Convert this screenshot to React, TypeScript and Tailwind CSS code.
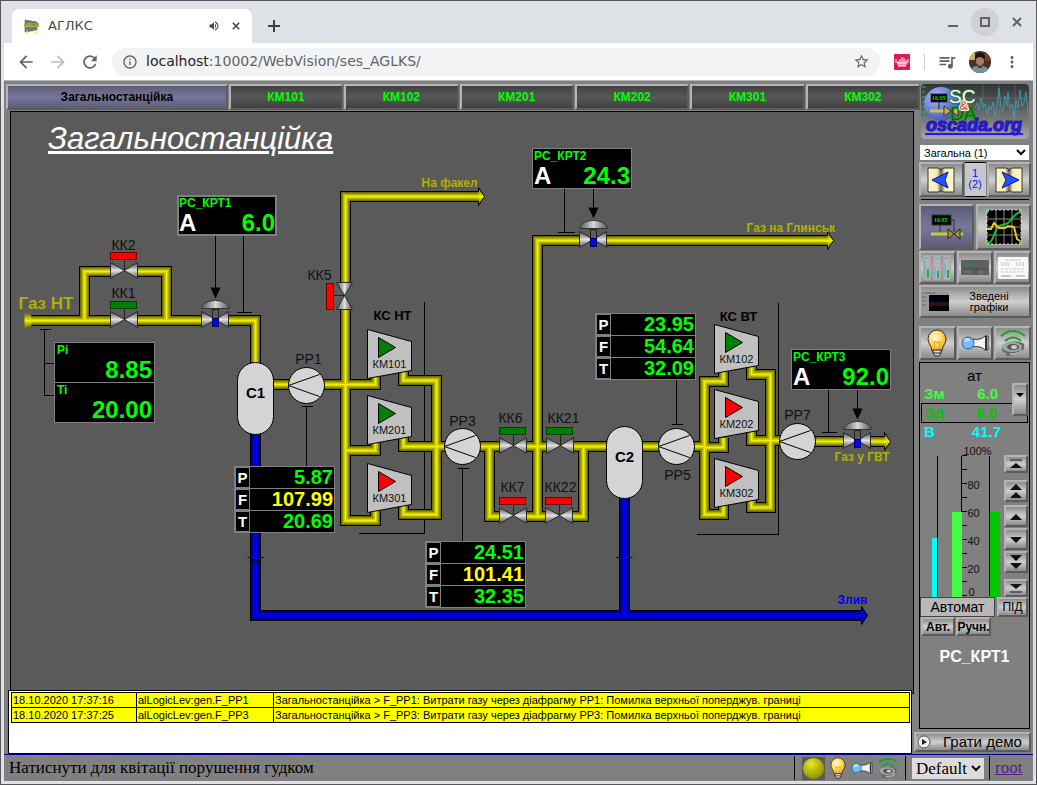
import { useState } from "react"
import type { ReactNode } from "react"
import {
  MdArrowBack,
  MdArrowForward,
  MdInfoOutline,
  MdMoreVert,
  MdQueueMusic,
  MdRefresh,
  MdStarBorder,
  MdVolumeUp,
} from "react-icons/md"

const bevel = "border-2 border-t-[#b4b4b4] border-l-[#b4b4b4] border-r-[#5c5c5c] border-b-[#5c5c5c]"
const metal = `${bevel} bg-linear-to-b from-[#8c8c8c] via-[#cfcfcf] to-[#8c8c8c] flex items-center justify-center`

const tabs = ["КМ101", "КМ102", "КМ201", "КМ202", "КМ301", "КМ302"]

const alarms = [
  {
    time: "18.10.2020 17:37:16",
    source: "alLogicLev:gen.F_PP1",
    text: "Загальностанційка > F_PP1: Витрати газу через діафрагму PP1: Помилка верхньої поперджув. границі",
  },
  {
    time: "18.10.2020 17:37:25",
    source: "alLogicLev:gen.F_PP3",
    text: "Загальностанційка > F_PP3: Витрати газу через діафрагму PP3: Помилка верхньої поперджув. границі",
  },
]

const gasPipes = [
  "M30 320H255V366",
  "M84 320V271H166V320",
  "M270 384H375V374",
  "M479 196H345V520H375V508",
  "M345 450H375V440",
  "M403 368V380H436V514H403V504",
  "M403 434V446H608",
  "M489 446V516H583V446",
  "M828 240H537V516",
  "M640 446H704",
  "M723 371V381H704V514H723V504",
  "M704 447H723V437",
  "M751 366V374H770V507H751V498",
  "M751 430V440H798",
  "M798 441H885",
]

const drainPipes = ["M255 430V615H862", "M624 494V615"]

const gasLayers = [
  [11, "#000000"],
  [9, "#6e6e00"],
  [7, "#8c8c00"],
  [5, "#b4b400"],
  [3, "#d2d200"],
  [1, "#f2f200"],
] as const

const drainLayers = [
  [11, "#000000"],
  [9, "#000078"],
  [7, "#0000a0"],
  [5, "#0000c8"],
  [3, "#0000e6"],
] as const

// ---------- mimic symbols ----------

function Pipes({ paths, layers }: { paths: string[]; layers: readonly (readonly [number, string])[] }) {
  return (
    <g fill="none" shapeRendering="crispEdges">
      {layers.map(([width, color]) => (
        <path key={width} d={paths.join("")} stroke={color} strokeWidth={width} />
      ))}
    </g>
  )
}

function PipeEnd({ x, y, fill }: { x: number; y: number; fill: string }) {
  return (
    <g transform={`translate(${x} ${y})`}>
      <path d="M0 -9L6 0L0 9Z" fill={fill} />
      <path d="M0 -5V-9L6 0L0 9V5" fill="none" stroke="#000" />
    </g>
  )
}

function BowTie() {
  return (
    <>
      <rect x="-14" y="-6" width="27" height="14" fill="#5a5a5a" />
      <path d="M-14 -8L0 0L13 -8V8L0 0L-14 8Z" fill="url(#steel)" stroke="#2a2a2a" />
    </>
  )
}

function Valve({ x, y, open, vertical }: { x: number; y: number; open?: boolean; vertical?: boolean }) {
  return (
    <g transform={`translate(${x} ${y})${vertical ? " rotate(-90)" : ""}`}>
      <BowTie />
      <path d="M0 0V-11" stroke="#222" />
      <rect
        x="-14"
        y="-18"
        width="26"
        height="7"
        fill={open ? "#008000" : "#ff0000"}
        stroke={open ? "#004000" : "#700000"}
      />
    </g>
  )
}

function ControlValve({ x, y }: { x: number; y: number }) {
  return (
    <g transform={`translate(${x} ${y})`}>
      <BowTie />
      <path d="M-14 -11C-13 -16 -7 -19 0 -19S13 -16 14 -11Z" fill="url(#steelH)" stroke="#333" />
      <rect x="-3" y="-10" width="6" height="10" fill="#5a5a5a" stroke="#222" />
      <rect x="-3" y="-1" width="6" height="8" fill="#0000ff" stroke="#000060" />
      <path d="M-5 -32H5L0 -21Z" fill="#000" />
    </g>
  )
}

function Meter({ x, y }: { x: number; y: number }) {
  return (
    <g transform={`translate(${x} ${y})`} stroke="#000">
      <circle r="18" fill="#d4d4d4" />
      <path d="M13 -11L-18 0L13 11" fill="none" />
    </g>
  )
}

function Vessel({ x, y, name }: { x: number; y: number; name: string }) {
  return (
    <g>
      <rect x={x - 18} y={y} width="36" height="72" rx="18" fill="#d4d4d4" stroke="#000" />
      <text x={x} y={y + 35} fontSize="15" fontWeight="bold" textAnchor="middle">
        {name}
      </text>
    </g>
  )
}

function Compressor({ x, y, name, running }: { x: number; y: number; name: string; running?: boolean }) {
  return (
    <g transform={`translate(${x} ${y})`}>
      <path d="M0 0L44 12V41L0 49Z" fill="#c0c0c0" stroke="#000" />
      <path d="M11 8L28 18L11 28Z" fill={running ? "#008000" : "#ff0000"} stroke="#000" />
      <text x="22" y="38" fontSize="11" textAnchor="middle" fill="#111">
        {name}
      </text>
    </g>
  )
}

function Tag({ x, y, children }: { x: number; y: number; children: string }) {
  return (
    <text x={x} y={y} fontSize="14" textAnchor="middle" fill="#111">
      {children}
    </text>
  )
}

function Plant() {
  return (
    <svg
      className="absolute left-0 top-0"
      width="902"
      height="578"
      viewBox="10.5 111.5 902 578"
      fontFamily="Liberation Sans, Arial, sans-serif"
    >
      <defs>
        <linearGradient id="steel" x1="0" y1="0" x2="0" y2="1">
          <stop offset="0" stopColor="#4c4c4c" />
          <stop offset="0.5" stopColor="#e0e0e0" />
          <stop offset="1" stopColor="#4c4c4c" />
        </linearGradient>
        <linearGradient id="steelH">
          <stop offset="0" stopColor="#555" />
          <stop offset="0.5" stopColor="#d8d8d8" />
          <stop offset="1" stopColor="#555" />
        </linearGradient>
        <linearGradient id="gas" x1="0" y1="0" x2="0" y2="1">
          <stop offset="0.1" stopColor="#707000" />
          <stop offset="0.5" stopColor="#f2f200" />
          <stop offset="0.9" stopColor="#707000" />
        </linearGradient>
      </defs>

      <g fill="none" stroke="#000" shapeRendering="crispEdges">
        <path d="M424 301V533H358" />
        <path d="M778 302V534H696" />
        <path d="M39 329H50M44 329V395H54M44 363H54" />
        <path d="M215 235V290M243 235V312M236 312H251" />
        <path d="M593 188V210M564 188V232M557 232H574" />
        <path d="M857 388V410M828 388V432M821 432H836" />
        <path d="M301 406H312M306 406V466" />
        <path d="M457 468H468M462 468V542" />
        <path d="M671 424H682M676 379V424" />
      </g>

      <Pipes paths={drainPipes} layers={drainLayers} />
      <Pipes paths={gasPipes} layers={gasLayers} />

      <path d="M24 311L31 315V325L24 329Z" fill="url(#gas)" />
      <PipeEnd x={478} y={196} fill="url(#gas)" />
      <PipeEnd x={827} y={240} fill="url(#gas)" />
      <PipeEnd x={884} y={441} fill="url(#gas)" />
      <PipeEnd x={861} y={615} fill="#0000c8" />
      <path d="M247 557H250M260 557H263M250 558L255 563L260 558" fill="none" stroke="#000" />
      <path d="M616 557H619M629 557H632M619 558L624 563L629 558" fill="none" stroke="#000" />

      <Valve x={124} y={270} />
      <Valve x={124} y={319} open />
      <Valve x={344} y={295} vertical />
      <Valve x={513} y={445} open />
      <Valve x={560} y={445} open />
      <Valve x={513} y={515} />
      <Valve x={559} y={515} />
      <ControlValve x={215} y={319} />
      <ControlValve x={593} y={239} />
      <ControlValve x={857} y={440} />

      <Vessel x={255} y={362} name="С1" />
      <Vessel x={624} y={426} name="С2" />
      <Meter x={306} y={385} />
      <Meter x={462} y={446} />
      <Meter x={676} y={446} />
      <Meter x={797} y={441} />

      <Compressor x={367} y={329} name="КМ101" running />
      <Compressor x={367} y={395} name="КМ201" running />
      <Compressor x={367} y={463} name="КМ301" />
      <Compressor x={714} y={324} name="КМ102" running />
      <Compressor x={714} y={389} name="КМ202" />
      <Compressor x={714} y={458} name="КМ302" />

      <Tag x={123} y={249}>КК2</Tag>
      <Tag x={123} y={297}>КК1</Tag>
      <Tag x={319} y={279}>КК5</Tag>
      <Tag x={510} y={422}>КК6</Tag>
      <Tag x={563} y={422}>КК21</Tag>
      <Tag x={512} y={491}>КК7</Tag>
      <Tag x={560} y={491}>КК22</Tag>
      <Tag x={308} y={363}>РР1</Tag>
      <Tag x={462} y={425}>РР3</Tag>
      <Tag x={677} y={479}>РР5</Tag>
      <Tag x={797} y={419}>РР7</Tag>

      <g fontWeight="bold" fontSize="12" fill="#b0b000">
        <text x="18" y="308" fontSize="17">Газ НТ</text>
        <text x="421" y="186">На факел</text>
        <text x="746" y="231">Газ на Глинськ</text>
        <text x="834" y="460">Газ у ГВТ</text>
        <text x="837" y="603" fill="#0000ff">Злив</text>
      </g>
      <g fontWeight="bold" fontSize="13" textAnchor="middle" fill="#000">
        <text x="392" y="319">КС НТ</text>
        <text x="738" y="320">КС ВТ</text>
      </g>
    </svg>
  )
}

// ---------- readouts over the mimic ----------

function Controller({ name, value, className }: { name: string; value: string; className: string }) {
  return (
    <div className={`absolute w-[100px] border border-[#808080] bg-black pl-px font-bold text-[#00ff00] ${className}`}>
      <div className="text-[12px] leading-[14px]">{name}</div>
      <div className="flex items-center justify-between pr-px text-[24px] leading-[25px]">
        <span className="text-white">А</span>
        <span>{value}</span>
      </div>
    </div>
  )
}

function SensorBox({ name, value }: { name: string; value: string }) {
  return (
    <div className="h-[39px] bg-black px-0.5 font-bold text-[#00ff00]">
      <div className="text-[12px] leading-[14px]">{name}</div>
      <div className="text-right text-[24px] leading-[26px]">{value}</div>
    </div>
  )
}

function PftTable({ values, flowAlarm, className }: { values: string[]; flowAlarm?: boolean; className: string }) {
  return (
    <div className={`absolute flex w-[101px] flex-col gap-px bg-[#808080] p-px font-bold ${className}`}>
      {["P", "F", "T"].map((key, i) => (
        <div key={key} className="flex h-[21px]">
          <span className="my-px ml-px mr-px w-[13px] bg-black text-center text-[15px] leading-[19px] text-white">{key}</span>
          <span
            className={`flex-1 bg-black pr-px text-right text-[20px] leading-[21px] ${
              flowAlarm && key === "F" ? "text-[#ffff00]" : "text-[#00ff00]"
            }`}
          >
            {values[i]}
          </span>
        </div>
      ))}
    </div>
  )
}

function Mimic() {
  return (
    <section className="relative ml-1.5 mr-[5px] min-h-[583px] flex-1 overflow-hidden border border-black bg-[#5a5a5a]">
      <h1 className="pl-[37px] pt-2 text-[31px] leading-[38px] text-white italic underline">Загальностанційка</h1>
      <Plant />
      <Controller name="PC_КРТ1" value="6.0" className="left-[166px] top-[83px] ring-1 ring-inset ring-[#808080]" />
      <Controller name="PC_КРТ2" value="24.3" className="left-[521px] top-[36px]" />
      <Controller name="PC_КРТ3" value="92.0" className="left-[780px] top-[237px]" />
      <div className="absolute left-[43px] top-[230px] flex w-[101px] flex-col gap-px bg-[#808080] p-px">
        <SensorBox name="Pi" value="8.85" />
        <SensorBox name="Ti" value="20.00" />
      </div>
      <PftTable values={["5.87", "107.99", "20.69"]} flowAlarm className="left-[223px] top-[354px]" />
      <PftTable values={["24.51", "101.41", "32.35"]} flowAlarm className="left-[414px] top-[429px]" />
      <PftTable values={["23.95", "54.64", "32.09"]} className="left-[584px] top-[201px]" />
    </section>
  )
}

// ---------- small pictures ----------

function Bulb({ className }: { className: string }) {
  return (
    <svg viewBox="0 0 20 28" className={className}>
      <defs>
        <radialGradient id="glow" cx="0.4" cy="0.35" r="0.7">
          <stop offset="0" stopColor="#fffbe0" />
          <stop offset="0.5" stopColor="#ffdc60" />
          <stop offset="1" stopColor="#f5a000" />
        </radialGradient>
      </defs>
      <path d="M10 1a9 9 0 0 1 9 9c0 5-4 7-4 12H5c0-5-4-7-4-12a9 9 0 0 1 9-9Z" fill="url(#glow)" stroke="#3a3020" />
      <path d="M8 21L7 12L10 14L13 12L12 21" fill="none" stroke="#e8a020" />
      <path d="M6 21h8v3l-2 3H8l-2-3Z" fill="#d8d8d8" stroke="#222" />
      <path d="M6 24h8" stroke="#222" />
    </svg>
  )
}

function Whistle({ className }: { className: string }) {
  return (
    <svg viewBox="0 0 28 18" className={className}>
      <path d="M11 5C17 6 21 5 24 2H27V16H24C21 13 17 12 11 13Z" fill="#f0f4f8" stroke="#333" />
      <path d="M25 2V16" stroke="#333" strokeWidth="2" />
      <circle cx="7" cy="9" r="6" fill="#78bcf8" stroke="#1860a8" />
      <ellipse cx="6" cy="6" rx="3" ry="2" fill="#b8dcff" />
    </svg>
  )
}

function Siren({ className }: { className: string }) {
  return (
    <svg viewBox="0 0 26 28" className={className}>
      <path d="M1 7Q13 -3 25 7M5 12Q13 5 21 12" fill="none" stroke="#18a030" strokeWidth="2" />
      <path d="M2 18C4 12 20 11 24 15C26 21 19 27 10 27C5 27 5 25 7 24C2 24 1 20 2 18Z" fill="#686868" />
      <ellipse cx="12" cy="18" rx="10" ry="5" fill="#a4a4a4" />
      <ellipse cx="13" cy="18" rx="6" ry="3" fill="#505050" />
      <ellipse cx="14" cy="18" rx="3" ry="2" fill="#ccc" />
      <path d="M10 25Q18 26 22 21" fill="none" stroke="#b4b4b4" strokeWidth="2" />
    </svg>
  )
}

function Logo() {
  return (
    <a href="#oscada" aria-label="oscada.org" className="block overflow-hidden rounded-sm">
      <svg viewBox="0 0 108 55" className="block w-full" fontFamily="Liberation Sans, Arial, sans-serif">
        <defs>
          <linearGradient id="plate" x1="0" y1="0" x2="0" y2="1">
            <stop offset="0" stopColor="#303434" />
            <stop offset="0.5" stopColor="#606464" />
            <stop offset="1" stopColor="#a8a8a8" />
          </linearGradient>
          <radialGradient id="ball" cx="0.35" cy="0.3" r="0.8">
            <stop offset="0" stopColor="#a8b8f8" />
            <stop offset="1" stopColor="#3850b8" />
          </radialGradient>
        </defs>
        <rect width="108" height="55" rx="2" fill="url(#plate)" />
        <path d="M0 14H108M0 28H108M62 0V42M78 0V42M94 0V42" stroke="#888" strokeOpacity="0.4" />
        <path d="M1 3h4M1 8h3M1 13h4M1 18h3M1 23h4M1 28h3M1 33h4" stroke="#20c060" />
        <path
          d="M54 24L56 19L58 26L60 14L62 23L64 20L66 30L68 22L70 26L72 18L74 32L76 21L78 4L80 24L82 27L84 12L86 22L87 8L89 25L91 20L93 33L95 16L97 24L99 6L101 22L103 19L105 8L107 30"
          fill="none"
          stroke="#38a8b8"
          strokeOpacity="0.8"
        />
        <circle cx="20" cy="20" r="17" fill="url(#ball)" />
        <rect x="10" y="10" width="16" height="8" fill="#000" stroke="#333" />
        <text x="11" y="16" fontSize="6" fontFamily="Liberation Serif, serif" fontWeight="bold" fill="#00e000">10.95</text>
        <path d="M18 18V27" stroke="#222" />
        <path d="M9 27H28" stroke="#c8c840" strokeWidth="3" />
        <path d="M23 22L30 27L23 32ZM37 22L30 27L37 32Z" fill="#c8b840" stroke="#333" />
        <g paintOrder="stroke" strokeLinejoin="round">
          <text x="29" y="36" fontSize="19" fill="#007000" stroke="#00b000" strokeWidth="1">DA</text>
          <text x="28" y="19" fontSize="19" fill="#fff" stroke="#208040" strokeWidth="2">SC</text>
          <text x="38" y="26" fontSize="13" fontWeight="bold" fill="#e86040" stroke="#fff" strokeWidth="2">&amp;</text>
        </g>
        <g fontSize="18" fontWeight="bold" fontStyle="italic">
          <text x="5" y="47" fill="#2818e8" stroke="#180878" strokeWidth="1" paintOrder="stroke">oscada.org</text>
        </g>
        <path d="M4 50H102" stroke="#2818e8" strokeWidth="2" />
      </svg>
    </a>
  )
}

function BookArrow({ back }: { back?: boolean }) {
  return (
    <svg width="28" height="26" viewBox="0 0 28 26">
      <defs>
        <linearGradient id="pages">
          <stop offset="0" stopColor="#fdf6c8" />
          <stop offset="0.35" stopColor="#f4ecb8" />
          <stop offset="0.5" stopColor="#6c6650" />
          <stop offset="0.65" stopColor="#f4ecb8" />
          <stop offset="1" stopColor="#fdf6c8" />
        </linearGradient>
      </defs>
      <path d="M1 1H11Q14 1 14 4Q14 1 17 1H27V25H17Q14 25 14 23Q14 25 11 25H1Z" fill="url(#pages)" stroke="#3a3830" />
      <path d={back ? "M5 13L21 5L18 13L21 21Z" : "M24 13L7 5L11 13L7 21Z"} fill="#2850ff" stroke="#0a1a80" />
    </svg>
  )
}

function SchemeIcon() {
  return (
    <svg width="34" height="28" viewBox="0 0 34 28">
      <rect x="2" y="2" width="19" height="10" fill="#000" stroke="#333" />
      <text x="4" y="9" fontSize="6" fontWeight="bold" fontFamily="Liberation Serif, serif" fill="#00e000">10.95</text>
      <path d="M10 12V20M21 7H24V20" fill="none" stroke="#333" />
      <path d="M1 21H33" stroke="#c8c838" strokeWidth="3" />
      <path d="M18 16L30 26V16L18 26Z" fill="#a09838" stroke="#222" />
    </svg>
  )
}

function TrendIcon() {
  return (
    <svg width="36" height="36" viewBox="0 0 36 36">
      <rect x="1" y="1" width="34" height="34" fill="#000" stroke="#ddd" strokeDasharray="2 2" />
      <path d="M10 1V35M18 1V35M26 1V35M1 10H35M1 18H35M1 26H35" stroke="#888" />
      <path d="M3 34C8 32 8 22 12 18S20 17 23 13S30 4 34 3" fill="none" stroke="#18c030" strokeWidth="2" />
      <path d="M1 20L5 20L8 14L13 19H19L22 17L28 18L31 30L34 32" fill="none" stroke="#f0c820" strokeWidth="2" />
      <path d="M0 0h3v3H0ZM33 0h3v3h-3ZM0 33h3v3H0ZM33 33h3v3h-3Z" fill="#60e060" />
    </svg>
  )
}

function PanelIcon() {
  return (
    <svg width="28" height="26" viewBox="0 0 28 26">
      <path d="M0 0h8v25H0ZM10 0h8v25h-8ZM20 0h8v25h-8Z" fill="#b4b4b8" stroke="#999" />
      <path d="M2 5V22M12 12V22M22 8V22" stroke="#30c0d0" />
      <path d="M5 14V23M15 16V23M25 15V23" stroke="#20b040" strokeWidth="2" />
      <path d="M1 3h5M11 3h5M21 3h5" stroke="#60b060" />
      <path d="M9 1V24M19 1V24" stroke="#c060c0" strokeOpacity="0.6" />
    </svg>
  )
}

function ConsoleIcon() {
  return (
    <svg width="28" height="16" viewBox="0 0 28 16">
      <rect width="28" height="15" fill="#606060" />
      <path d="M1 9H26M15 9V15" stroke="#484848" />
      <path d="M2 4h10" stroke="#308040" strokeWidth="2" />
      <path d="M4 12h6M17 12h6" stroke="#888" strokeDasharray="2 1" />
    </svg>
  )
}

function ReportIcon() {
  return (
    <svg width="30" height="22" viewBox="0 0 30 22">
      <rect width="30" height="22" fill="#f8f8f8" />
      <path d="M8 3h14M3 6h9M18 6h9M3 8h9M18 8h9" stroke="#bbb" strokeDasharray="2 1" />
      <path d="M3 12h24M3 15h24" stroke="#ccc" strokeDasharray="3 1" />
      <path d="M3 19h10M18 19h9" stroke="#999" />
    </svg>
  )
}

function GraphIcon() {
  return (
    <svg width="28" height="20" viewBox="0 0 28 20">
      <rect width="28" height="20" fill="#999" />
      <rect x="8" y="3" width="20" height="16" fill="#000" />
      <path d="M8 11H28" stroke="#203080" />
      <path d="M8 13H28" stroke="#602020" />
      <path d="M1 5h4" stroke="#c03030" />
      <path d="M1 9h4" stroke="#30a030" />
      <path d="M1 13h4" stroke="#3060e0" />
      <path d="M1 1h14" stroke="#666" />
    </svg>
  )
}

// ---------- side panel ----------

function Gauge() {
  return (
    <svg width="82" height="157" viewBox="919.5 440.5 82 157" className="block" fontFamily="Liberation Sans, Arial, sans-serif">
      <g stroke="#000" fill="none" shapeRendering="crispEdges">
        <path d="M937 456V596M961 456V596M989 456V596" />
        <path d="M961 456H966M961 470H966M961 484H966M961 498H966M961 512H966M961 526H966M961 540H966M961 554H966M961 568H966M961 582H966M961 596H966" />
      </g>
      <g shapeRendering="crispEdges">
        <rect x="931" y="538" width="5" height="59" fill="#00ffff" />
        <rect x="951" y="512" width="10" height="85" fill="#40ff40" />
        <rect x="989" y="512" width="10" height="85" fill="#00c800" />
      </g>
      <g fontSize="11" fill="#111">
        <text x="963" y="455">100%</text>
        <text x="967" y="489">80</text>
        <text x="967" y="517">60</text>
        <text x="967" y="545">40</text>
        <text x="967" y="573">20</text>
        <text x="968" y="596">0</text>
      </g>
    </svg>
  )
}

const steps = [
  { label: "Максимум", height: "h-[18px]", bar: "M0 1H12", d: "M6 4L12 9H0Z" },
  { label: "Вгору швидко", height: "h-[22px] mt-[7px]", d: "M6 -2L12 4H0ZM6 6L12 12H0Z" },
  { label: "Вгору", height: "h-[22px] mt-[3px]", d: "M6 3L12 9H0Z" },
  { label: "Вниз", height: "h-[22px] mt-px", d: "M6 9L12 3H0Z" },
  { label: "Вниз швидко", height: "h-[22px] mt-px", d: "M6 4L12 -2H0ZM6 12L12 6H0Z" },
  { label: "Мінімум", height: "h-[18px] mt-[6px]", bar: "M0 9H12", d: "M6 6L12 1H0Z" },
]

function Loop() {
  return (
    <section className="relative mr-px mt-0.5 flex-1 border border-black pt-1">
      <div className="text-center text-[15px] leading-[18px]">ат</div>
      <dl className="grid grid-cols-[1fr_1fr] text-[15px] font-bold">
        <dt className="pl-1 leading-[18px] text-[#40ff40]">Зм</dt>
        <dd className="pr-[31px] text-right leading-[18px] text-[#40ff40]">6.0</dd>
        <dt className="ml-px border-y border-l border-black pl-[3px] leading-[18px] text-[#00c800]">Зд</dt>
        <dd className="mr-px border-y border-r border-black pr-[30px] text-right leading-[18px] text-[#00c800]">6.0</dd>
        <dt className="pl-1 leading-[17px] text-[#00ffff]">В</dt>
        <dd className="pr-[28px] text-right leading-[17px] text-[#00ffff]">41.7</dd>
      </dl>
      <button aria-label="Вибрати" className={`absolute right-px top-[20px] h-[33px] w-4 ${metal}`}>
        <svg width="8" height="16" viewBox="0 0 8 16">
          <path d="M0 1H8L4 5Z" />
        </svg>
      </button>
      <div className="flex h-[157px] justify-between">
        <Gauge />
        <div className="mr-px flex w-6 flex-col pt-[15px]">
          {steps.map((s) => (
            <button key={s.label} aria-label={s.label} className={`shrink-0 ${s.height} ${metal}`}>
              <svg width="12" height="14" viewBox="0 -2 12 14" className="overflow-visible">
                <path d={s.d} fill="#111" />
                {s.bar && <path d={s.bar} stroke="#111" />}
              </svg>
            </button>
          ))}
        </div>
      </div>
      <div className="flex gap-0.5 text-[14px]">
        <output className="w-[75px] border border-[#444] bg-[#b8b8b8] text-center leading-[18px]">Автомат</output>
        <button className={`h-5 w-[31px] text-[12px] ${metal}`}>ПІД</button>
      </div>
      <div className="flex gap-px pl-px text-[12px] font-bold">
        <button className={`h-[19px] w-[34px] ${metal}`}>Авт.</button>
        <button className={`h-[19px] w-[35px] ${metal}`}>Ручн.</button>
      </div>
      <div className="pt-[11px] text-center text-[16px] leading-[20px] font-bold text-white">PC_КРТ1</div>
    </section>
  )
}

function SidePanel() {
  return (
    <aside className="flex w-[114px] shrink-0 flex-col pr-0.5">
      <div className="pl-0.5 pr-0.5">
        <Logo />
      </div>
      <select
        aria-label="Група"
        className="ml-px mr-0.5 mt-[6px] h-[15px] bg-white text-[11px] leading-[13px]"
        defaultValue="main"
      >
        <option value="main">Загальна (1)</option>
      </select>
      <div className="mt-0.5 flex h-[35px] gap-px">
        <button aria-label="Назад" className={`flex-1 ${metal}`}>
          <BookArrow back />
        </button>
        <div className="w-[21px] border-y border-black bg-[#c8c8cc] pt-[5px] text-center text-[11px] leading-[11px] text-[#1010ff]">
          1<br />(2)
        </div>
        <button aria-label="Вперед" className={`flex-1 ${metal}`}>
          <BookArrow />
        </button>
      </div>
      <hr className="mx-0.5 mb-[4px] mt-0.5 border-black" />
      <div className="flex h-[46px] gap-0.5">
        <button aria-label="Мнемосхема" className={`flex flex-1 items-center justify-center bg-linear-to-b from-[#5c5c78] via-[#77779a] to-[#5c5c78] ${bevel}`}>
          <SchemeIcon />
        </button>
        <button aria-label="Графіки" className={`flex-1 ${metal}`}>
          <TrendIcon />
        </button>
      </div>
      <div className="mt-px flex h-[33px] gap-px">
        <button aria-label="Контури" className={`flex-1 ${metal}`}>
          <PanelIcon />
        </button>
        <button aria-label="Огляд" className={`flex-1 ${metal}`}>
          <ConsoleIcon />
        </button>
        <button aria-label="Документи" className={`flex-1 ${metal}`}>
          <ReportIcon />
        </button>
      </div>
      <button className={`mt-px h-[33px] text-[11px] leading-[11px] ${metal}`}>
        <GraphIcon />
        <span className="flex-1 text-center">
          Зведені
          <br />
          графіки
        </span>
      </button>
      <div className="mt-2 flex h-[34px] gap-px">
        <button aria-label="Світло" className={`flex-1 ${metal}`}>
          <Bulb className="h-[28px] w-5" />
        </button>
        <button aria-label="Гудок" className={`flex-1 ${metal}`}>
          <Whistle className="h-[18px] w-[28px]" />
        </button>
        <button aria-label="Сирена" className={`flex-1 ${metal}`}>
          <Siren className="h-[28px] w-[26px]" />
        </button>
      </div>
      <Loop />
      <button className={`-ml-[5px] mb-0.5 mt-[3px] h-[20px] text-[15px] ${metal}`}>
        <svg width="16" height="16" viewBox="0 0 16 16">
          <circle cx="8" cy="8" r="6" fill="#eee" stroke="#555" strokeWidth="1" />
          <path d="M6 5L11 8L6 11Z" fill="#222" />
        </svg>
        <span className="flex-1 pl-1 text-center">Грати демо</span>
      </button>
    </aside>
  )
}

// ---------- browser frame ----------

function Cross({ size }: { size: number }) {
  return (
    <svg width={size} height={size} viewBox="0 0 10 10" stroke="currentColor" strokeWidth="2">
      <path d="M1 1L9 9M9 1L1 9" />
    </svg>
  )
}

function Avatar() {
  return (
    <svg width="22" height="22" viewBox="0 0 22 22">
      <clipPath id="round">
        <circle cx="11" cy="11" r="11" />
      </clipPath>
      <g clipPath="url(#round)">
        <rect width="22" height="22" fill="#4a3028" />
        <path d="M0 2h6v7H0Z" fill="#c8b070" />
        <path d="M16 0h6v10h-6Z" fill="#803828" />
        <path d="M1 22C2 15 6 15 11 15S20 16 21 22Z" fill="#7890a0" />
        <ellipse cx="11" cy="10" rx="4" ry="6" fill="#a87c68" />
        <path d="M6 9C5 3 9 1 12 2S17 5 15 9C14 5 8 5 6 9Z" fill="#181414" />
        <path d="M8 12Q11 18 14 12L13 17H9Z" fill="#50382c" />
      </g>
    </svg>
  )
}

function BrowserChrome() {
  const [url, setUrl] = useState("localhost:10002/WebVision/ses_AGLKS/")
  const slash = url.indexOf(":")

  return (
    <header className="font-['DejaVu_Sans',sans-serif] text-[#5f6368]">
      <div className="flex h-[42px] items-end">
        <div className="ml-2 flex h-[34px] w-[240px] items-center rounded-t-lg bg-white pl-3 pr-3 text-[13px] text-[#45494d]">
          <svg width="16" height="16" viewBox="0 0 16 16">
            <path d="M1 2L13 4V12L1 14Z" fill="#777" stroke="#444" strokeWidth="0.5" />
            <path d="M0 5H15V9H0Z" fill="#b8b040" />
            <path d="M1 8L3 5L5 8M7 5V8M9 8V5L11 8V5M13 8V5" stroke="#777" fill="none" />
            <path d="M4 12L1 15H5M11 12V15H15" stroke="#f0f040" fill="none" />
          </svg>
          <span className="flex-1 pl-2">АГЛКС</span>
          <MdVolumeUp size={12} />
          <button aria-label="Закрити вкладку" className="pl-3">
            <Cross size={8} />
          </button>
        </div>
        <button aria-label="Нова вкладка" className="mb-[11px] ml-4 text-[#3c4043]">
          <svg width="12" height="12" viewBox="0 0 12 12" stroke="currentColor" strokeWidth="2">
            <path d="M6 0V12M0 6H12" />
          </svg>
        </button>
        <div className="mb-[7px] mr-1.5 flex flex-1 items-center justify-end gap-2">
          <button aria-label="Згорнути" className="flex h-7 w-5 items-center justify-center">
            <span className="mt-2 h-0.5 w-2.5 bg-[#5f6368]" />
          </button>
          <button aria-label="Розгорнути" className="flex h-7 w-7 items-center justify-center rounded-full bg-[#cfd1d5]">
            <span className="h-2.5 w-2.5 border-2 border-[#5f6368]" />
          </button>
          <button aria-label="Закрити" className="flex h-7 w-5 items-center justify-center">
            <Cross size={10} />
          </button>
        </div>
      </div>
      <div className="flex h-[38px] items-center border-b border-[#b8b8b8] bg-white pl-3 pr-3">
        <button aria-label="Назад">
          <MdArrowBack size={20} />
        </button>
        <button aria-label="Вперед" className="ml-3 text-[#babcbe]">
          <MdArrowForward size={20} />
        </button>
        <button aria-label="Оновити" className="ml-3">
          <MdRefresh size={20} />
        </button>
        <div className="ml-3 flex h-7 flex-1 items-center rounded-full bg-[#f1f3f4] pl-2.5 pr-2.5">
          <MdInfoOutline size={16} />
          <label className="relative ml-2 flex-1 pb-0.5 text-[14px] leading-5">
            <span aria-hidden="true">
              <span className="text-[#202124]">{url.slice(0, slash)}</span>
              {url.slice(slash)}
            </span>
            <input
              aria-label="Адреса"
              value={url}
              onChange={(e) => setUrl(e.target.value)}
              className="absolute inset-0 w-full bg-transparent text-transparent outline-none"
            />
          </label>
          <MdStarBorder size={17} />
        </div>
        <svg width="16" height="16" viewBox="0 0 16 16" className="ml-3.5">
          <rect width="16" height="16" rx="1" fill="#d81b52" />
          <path d="M2 5V9M4 7V11M6 5V12M8 3V12M10 4V12M12 6V11M14 5V9" stroke="#fff" />
          <path d="M4 12H12M3 9H13" stroke="#fff" />
        </svg>
        <span className="ml-3.5 h-4 w-px bg-[#c8cacc]" />
        <MdQueueMusic size={20} className="ml-3" />
        <span className="ml-3">
          <Avatar />
        </span>
        <button aria-label="Меню" className="ml-3">
          <MdMoreVert size={18} />
        </button>
      </div>
    </header>
  )
}

function StatusCell({ children, className }: { children: ReactNode; className: string }) {
  return <div className={`flex h-6 items-center border-l border-black ${className}`}>{children}</div>
}

function StatusBar() {
  return (
    <footer className="flex h-[27px] items-center border-t border-[#000090] bg-[#808080] pl-[5px] pr-1.5 font-['Liberation_Serif',serif] text-[17px]">
      <span className="flex-1">Натиснути для квітації порушення гудком</span>
      <StatusCell className="w-[111px] gap-[5px] pl-[7px]">
        <svg width="23" height="23" viewBox="0 0 24 24">
          <defs>
            <radialGradient id="lamp" cx="0.4" cy="0.3" r="0.7">
              <stop offset="0" stopColor="#e8e820" />
              <stop offset="1" stopColor="#909000" />
            </radialGradient>
          </defs>
          <rect width="24" height="24" fill="#5a5a5a" />
          <circle cx="12" cy="12" r="11" fill="url(#lamp)" />
        </svg>
        <Bulb className="h-[22px] w-4" />
        <Whistle className="h-[14px] w-[22px]" />
        <Siren className="h-[22px] w-5" />
      </StatusCell>
      <StatusCell className="w-[84px] pl-1.5">
        <select aria-label="Стиль" defaultValue="Default" className="h-[21px] w-[72px] bg-[#dcdcdc] text-[17px] leading-[20px]">
          <option>Default</option>
        </select>
      </StatusCell>
      <StatusCell className="w-[38px] pl-[5px]">
        <a href="#user" className="text-[#551a8b] underline">
          root
        </a>
      </StatusCell>
    </footer>
  )
}

export default function App() {
  const [active, setActive] = useState("Загальностанційка")

  return (
    <div className="flex min-h-screen flex-col border border-[#55555a] bg-[#dee1e6] px-[3px] pb-[3px] font-['Liberation_Sans',Arial,sans-serif] text-black">
      <BrowserChrome />
      <main className="flex flex-1 bg-[#808080] pt-[3px]">
        <div className="flex min-w-0 flex-1 flex-col">
          <nav className="-mr-px grid h-[27px] grid-cols-[223fr_repeat(6,115fr)] gap-px pb-px pl-0.5 text-[12px] font-bold">
            <button
              onClick={() => setActive("Загальностанційка")}
              className={`bg-linear-to-b from-[#5c5c78] via-[#77779a] to-[#5c5c78] ${bevel}`}
            >
              Загальностанційка
            </button>
            {tabs.map((tab) => (
              <button
                key={tab}
                onClick={() => setActive(tab)}
                aria-current={active === tab}
                className={`bg-linear-to-b from-[#404040] via-[#585858] to-[#404040] text-[#00ff00] ${bevel}`}
              >
                {tab}
              </button>
            ))}
          </nav>
          <Mimic />
          <div className="relative -mt-1 ml-1 mr-[7px] h-[64px] border border-black bg-white pl-0.5 pr-px pt-px">
            <table className="w-full border-collapse bg-[#ffff00] text-[11px] leading-[14px]">
              <tbody>
                {alarms.map((a) => (
                  <tr key={a.time}>
                    <td className="w-[125px] border border-black px-px">{a.time}</td>
                    <td className="w-[137px] border border-black px-px">{a.source}</td>
                    <td className="border border-black px-px">{a.text}</td>
                  </tr>
                ))}
              </tbody>
            </table>
          </div>
        </div>
        <SidePanel />
      </main>
      <StatusBar />
    </div>
  )
}
